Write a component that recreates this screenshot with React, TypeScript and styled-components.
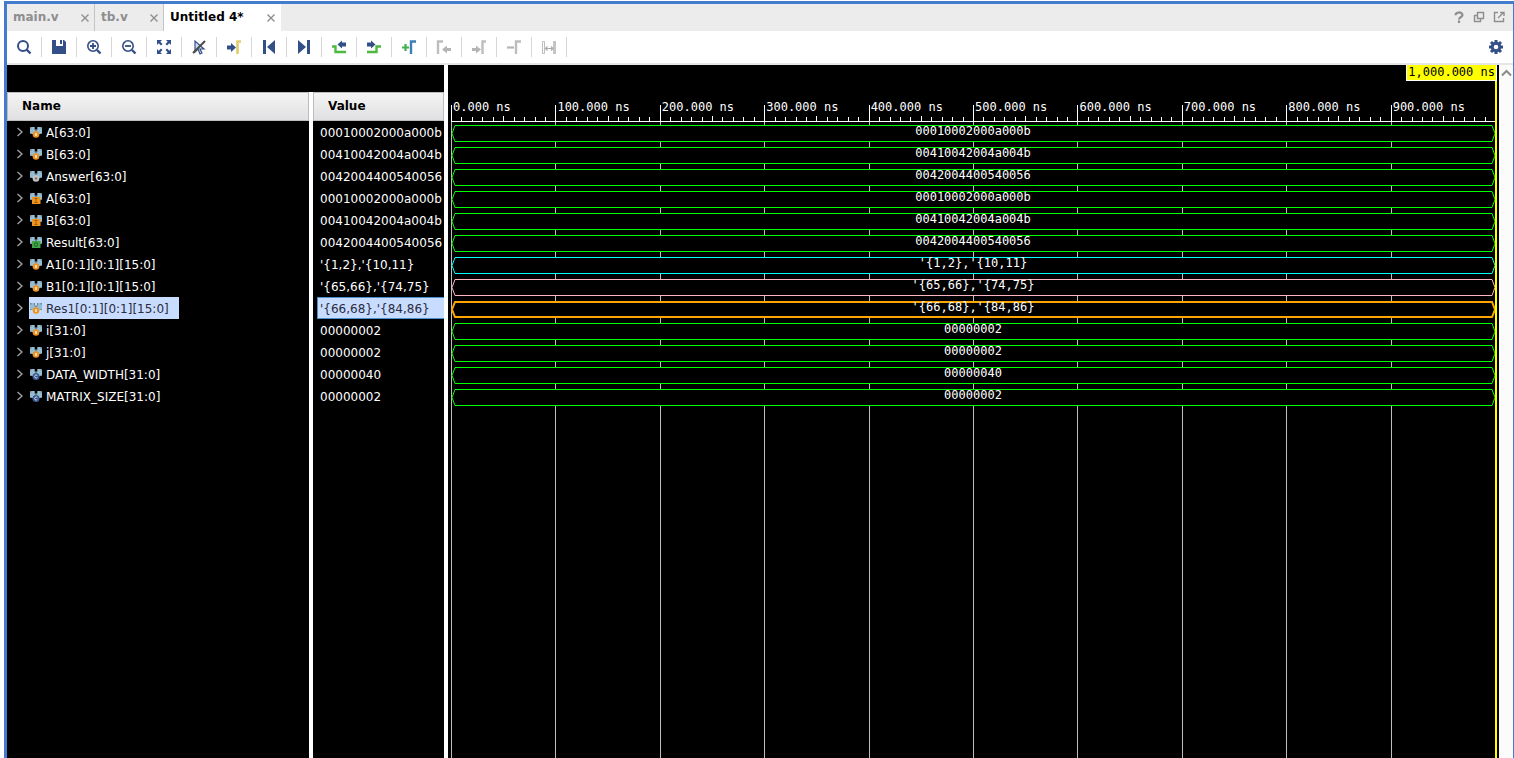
import React from 'react';
import styled, { createGlobalStyle, css } from 'styled-components';

const NAVY = '#334f88';
const LIME = '#00ff00';
const GRID = '#bebebe';

const Global = createGlobalStyle`
  * { box-sizing: border-box; }
  html, body, #root { height: 100%; }
  body { margin: 0; background: #fff; overflow: hidden; font: 12px/16px "DejaVu Sans", sans-serif; color: #000; }
  button { font: inherit; color: inherit; background: none; border: 0; padding: 0; margin: 0; }
  svg { display: block; }
`;

const Page = styled.div`
  height: 100vh;
  padding: 1px 0 0 4px;
`;

const Frame = styled.main`
  height: 100%;
  display: flex;
  flex-direction: column;
  border: solid #437bcd;
  border-width: 3px 1px 0 3px;
`;

const TabBar = styled.header`
  height: 27px;
  flex: none;
  display: flex;
  justify-content: space-between;
  background: #ececec;
`;

const Tabs = styled.nav`
  display: flex;
`;

const Tab = styled.div<{ $active?: boolean; $wide?: boolean }>`
  display: flex;
  align-items: center;
  justify-content: space-between;
  width: ${p => (p.$active ? 117 : p.$wide ? 88 : 69)}px;
  padding: 0 5px 0 6px;
  font-weight: bold;
  color: ${p => (p.$active ? '#000' : '#8e8e8e')};
  background: ${p => (p.$active ? '#fff' : 'transparent')};
  border-right: 1px solid ${p => (p.$active ? '#fff' : '#c4c4c4')};
`;

const TabTitle = styled.button`
  padding-bottom: 2px;
`;

const CloseButton = styled.button`
  color: #8e8e8e;
`;

const WindowButtons = styled.div`
  display: flex;
  align-items: center;
  gap: 8px;
  padding: 0 8px 2px 0;
  color: #8e8e8e;
`;

const ToolBar = styled.div`
  height: 34px;
  flex: none;
  display: flex;
  align-items: center;
  justify-content: space-between;
  padding-right: 9px;
  background: #fff;
  border-bottom: 2px solid #e6e6e6;
`;

const ToolGroup = styled.div`
  display: flex;
`;

const ToolButton = styled.button`
  width: 35px;
  height: 20px;
  display: flex;
  align-items: center;
  justify-content: center;
  border-right: 1px solid #d6d6d6;
  color: ${NAVY};
`;

const Body = styled.div`
  flex: 1;
  min-height: 0;
  display: flex;
  background: #fff;
`;

const SignalPanel = styled.section`
  width: 437px;
  flex: none;
  display: flex;
  flex-direction: column;
  background: #000;
`;

const PanelTop = styled.div`
  height: 27px;
  flex: none;
`;

const Columns = styled.div`
  flex: 1;
  display: flex;
  gap: 4px;
  background: #fff;
`;

const Column = styled.div<{ $fill?: boolean }>`
  ${p => (p.$fill ? css`flex: 1;` : css`width: 131px;`)}
  min-width: 0;
  overflow: hidden;
  background: #000;
  color: #fff;
`;

const ColumnHead = styled.div`
  height: 29px;
  padding: 0 14px;
  line-height: 27px;
  font-weight: bold;
  color: #000;
  background: linear-gradient(#f4f4f4, #e0e0e2);
  border: 1px solid #bdbdbd;
`;

const NameRow = styled.div`
  height: 22px;
  display: flex;
  align-items: center;
  gap: 6px;
  padding-left: 10px;
`;

const Expander = styled.button`
  width: 6px;
`;

const SignalName = styled.span<{ $selected?: boolean }>`
  height: 22px;
  display: flex;
  align-items: center;
  gap: 4px;
  padding: 1px 10px 0 1px;
  line-height: 20px;
  ${p => p.$selected && css`background: #c8dcff; color: #2b2b3d;`}
`;

const ValueCell = styled.div<{ $selected?: boolean }>`
  height: 22px;
  margin-left: 4px;
  padding: 1px 0 0 2px;
  border: solid transparent;
  border-width: 1px 0 1px 1px;
  line-height: 20px;
  white-space: nowrap;
  ${p => p.$selected && css`background: #c8dcff; border-color: #4a8fd0; color: #2b2b3d;`}
`;

const WavePanel = styled.section`
  flex: 1;
  min-width: 0;
  margin-left: 4px;
  padding: 0 2px 0 3px;
  background: #000;
  color: #fff;
  font: 12px/14px "DejaVu Sans Mono", monospace;
`;

const Plot = styled.div`
  position: relative;
  height: 100%;
  padding-right: 2px;
`;

const Cursor = styled.div`
  position: absolute;
  z-index: 2;
  top: 0;
  bottom: 0;
  right: 0;
  border-right: 2px solid #ffff00;
`;

const CursorLabel = styled.div`
  position: absolute;
  z-index: 3;
  top: 0;
  right: 0;
  height: 16px;
  padding: 0 1px;
  border: solid #fff;
  border-width: 0 1px 1px 1px;
  background: #ffff00;
  color: #000;
  white-space: nowrap;
`;

const Ruler = styled.div`
  height: 57px;
  display: flex;
  align-items: flex-end;
  border-bottom: 1px solid #fff;
`;

const Division = styled.div`
  flex: 1;
  min-width: 0;
  height: 16px;
  display: flex;
  flex-direction: column;
  justify-content: space-between;
  border-left: 1px solid #fff;
`;

const DivisionLabel = styled.span`
  height: 4px;
  padding-left: 1px;
  line-height: 4px;
  white-space: nowrap;
`;

const Ticks = styled.div`
  display: flex;
  align-items: flex-end;
`;

const Tick = styled.i<{ $h: number }>`
  flex: 1;
  height: ${p => p.$h}px;
  border-right: 1px solid #fff;
  &:last-child { border: 0; }
`;

const Grid = styled.div`
  position: absolute;
  top: 57px;
  bottom: 0;
  left: 0;
  right: 2px;
  display: flex;
`;

const GridLine = styled.div`
  flex: 1;
  border-left: 1px solid ${GRID};
`;

const WaveRows = styled.div`
  position: relative;
  padding-top: 3px;
  display: flex;
  flex-direction: column;
  gap: 5px;
`;

const Wave = styled.div<{ $color: string }>`
  height: 17px;
  display: flex;
  color: ${p => p.$color};
  svg { flex: none; width: 5px; height: 17px; overflow: visible; }
`;

const WaveBody = styled.div<{ $selected?: boolean }>`
  flex: 1;
  display: flex;
  align-items: center;
  justify-content: center;
  padding-bottom: 4px;
  background: #000;
  border: solid currentColor;
  border-width: ${p => (p.$selected ? '2px 0' : '1px 0')};
  span { color: #fff; line-height: 11px; }
`;

const ScrollBar = styled.div`
  width: 14px;
  flex: none;
  display: flex;
  justify-content: center;
  align-items: flex-start;
  padding: 4px 0 0 1px;
  background: #fbfbfb;
`;

const tools: Record<string, React.ReactNode> = {
  Find: <><circle cx="7" cy="7" r="5" fill="none" stroke={NAVY} strokeWidth="2" /><path d="M10.5 10.5l4 4" stroke={NAVY} strokeWidth="2.4" /></>,
  Save: <path d="M1 1h4v6h7V1h1l2 2v12H1zM9 1h2v4H9z" fill={NAVY} />,
  'Zoom In': <><circle cx="7" cy="7" r="5.2" fill="none" stroke={NAVY} strokeWidth="1.6" /><path d="M11 11l3.5 3.5" stroke={NAVY} strokeWidth="2.4" /><path d="M4 7h6M7 4v6" stroke={NAVY} strokeWidth="1.8" /></>,
  'Zoom Out': <><circle cx="7" cy="7" r="5.2" fill="none" stroke={NAVY} strokeWidth="1.6" /><path d="M11 11l3.5 3.5" stroke={NAVY} strokeWidth="2.4" /><path d="M4 7h6" stroke={NAVY} strokeWidth="1.8" /></>,
  'Zoom Fit': <><path d="M1 1h5L4.300 2.700 6.500 5 5 6.500 2.700 4.300 1 6zM15 1v5l-1.700-1.700L11 6.500 9.500 5l2.200-2.300L10 1zM1 15v-5l1.700 1.700L5 9.500 6.500 11l-2.200 2.300L6 15zM15 15h-5l1.700-1.700L9.500 11 11 9.500l2.300 2.200L15 10z" fill={NAVY} /></>,
  'Cursor Snap': <><path d="M4 2v11l3-3 2 5 2-1-2-4h4z" fill="#d5dcea" stroke={NAVY} strokeWidth="1.200" /><path d="M2 14L14 2" stroke="#4a4a4a" strokeWidth="2" /></>,
  'Go to Cursor': <><path d="M1 6.500h4V4l5 4.500L5 13v-2.500H1z" fill={NAVY} /><path d="M11.500 15V2.500H15" fill="none" stroke="#e3cb70" strokeWidth="2.600" /></>,
  'Go to Start': <path d="M2 1h3v14H2zM14 1v14L6 8z" fill={NAVY} />,
  'Go to End': <path d="M11 1h3v14h-3zM2 1v14l8-7z" fill={NAVY} />,
  'Previous Transition': <><path d="M1 7.500h3.500v5.500H15" fill="none" stroke="#4db93f" strokeWidth="2.400" /><path d="M15 3.500h-4V1.500L6.500 5.500 11 9.500v-2h4z" fill={NAVY} /></>,
  'Next Transition': <><path d="M1 13h9.500V7.500H15" fill="none" stroke="#4db93f" strokeWidth="2.400" /><path d="M1 3.500h4v-2l4.500 4-4.500 4v-2H1z" fill={NAVY} /></>,
  'Add Marker': <><path d="M1 8.500h7M4.500 5v7" stroke="#45ae50" strokeWidth="2.200" /><path d="M10 15V2.500h5" fill="none" stroke="#3b7fb5" strokeWidth="2.400" /></>,
  'Previous Marker': <><path d="M2 15V2.500h5" fill="none" stroke="#bdbdbd" strokeWidth="2.400" /><path d="M15 9h-4V6.500l-5 4 5 4V12h4z" fill="#b5b5b5" /></>,
  'Next Marker': <><path d="M11.500 15V2.500H15" fill="none" stroke="#bdbdbd" strokeWidth="2.400" /><path d="M1 9h4V6.500l5 4-5 4V12H1z" fill="#b5b5b5" /></>,
  'Delete Marker': <><path d="M1 8.500h7" stroke="#b5b5b5" strokeWidth="2.200" /><path d="M10 15V2.500h5" fill="none" stroke="#bdbdbd" strokeWidth="2.400" /></>,
  'Swap Cursors': <><path d="M1.500 2.500h2v12h-2z" fill="none" stroke="#bdbdbd" /><path d="M12 2h3v13h-3z" fill="#c4c4c4" /><path d="M5 9.500h6M6.500 7.500l-2 2 2 2M10 7.500l2 2-2 2" fill="none" stroke="#ababab" strokeWidth="1.200" /></>,
};

type Kind = 'reg' | 'net' | 'in' | 'out' | 'const';
interface Signal { name: string; value: string; kind: Kind; color?: string; selected?: boolean }

const signals: Signal[] = [
  { name: 'A[63:0]', value: '00010002000a000b', kind: 'reg' },
  { name: 'B[63:0]', value: '00410042004a004b', kind: 'reg' },
  { name: 'Answer[63:0]', value: '0042004400540056', kind: 'net' },
  { name: 'A[63:0]', value: '00010002000a000b', kind: 'in' },
  { name: 'B[63:0]', value: '00410042004a004b', kind: 'in' },
  { name: 'Result[63:0]', value: '0042004400540056', kind: 'out' },
  { name: 'A1[0:1][0:1][15:0]', value: "'{1,2},'{10,11}", kind: 'reg', color: '#00ffff' },
  { name: 'B1[0:1][0:1][15:0]', value: "'{65,66},'{74,75}", kind: 'reg', color: '#ffb6c1' },
  { name: 'Res1[0:1][0:1][15:0]', value: "'{66,68},'{84,86}", kind: 'reg', color: '#ffa500', selected: true },
  { name: 'i[31:0]', value: '00000002', kind: 'reg' },
  { name: 'j[31:0]', value: '00000002', kind: 'reg' },
  { name: 'DATA_WIDTH[31:0]', value: '00000040', kind: 'const' },
  { name: 'MATRIX_SIZE[31:0]', value: '00000002', kind: 'const' },
];

const times = ['0.000 ns', '100.000 ns', '200.000 ns', '300.000 ns', '400.000 ns', '500.000 ns', '600.000 ns', '700.000 ns', '800.000 ns', '900.000 ns'];
const tickHeights = [4, 4, 4, 4, 5, 4, 4, 4, 4, 4];

function SignalIcon({ kind }: { kind: Kind }) {
  return (
    <svg width="12" height="12" viewBox="0 0 12 12" aria-hidden="true">
      <path d="M0 0h5v2l1 1.500L7 2V0h5v7H9.500L8 8H4L2.500 7H0z" fill="#93bdd3" />
      <path d="M0 0h1.500v1.500H0zM10.500 0H12v1.500h-1.500zM0 6h1.500v1H0zM10.500 6H12v1h-1.500z" fill="#70838f" />
      <path d="M4.500 0v2L6 4l1.500-2V0" fill="none" stroke="#70838f" />
      {kind === 'reg' && <><circle cx="6" cy="7.500" r="3.300" fill="#ef9224" /><path d="M5 6h2v3H5z" fill="#fbd9a6" /></>}
      {kind === 'net' && <><circle cx="6" cy="7.500" r="3.300" fill="#c4c4c4" /><circle cx="6" cy="7.500" r="1.200" fill="#777" /></>}
      {kind === 'const' && <><circle cx="6" cy="7.500" r="3.500" fill="#3d5a90" /><path d="M7.300 6.500A1.500 1.500 0 1 0 7.300 8.500" fill="none" stroke="#d8e2f3" /></>}
      {kind === 'in' && <><path d="M2 4h8.500v7H2z" fill="#ee931f" /><path d="M4.500 5.500h3M4.500 9.500h3M6 5.500v4" stroke="#a15e0a" /></>}
      {kind === 'out' && <><path d="M2 4h8.500v7H2z" fill="#42a548" /><ellipse cx="6" cy="7.500" rx="1.500" ry="2" fill="none" stroke="#1e6b27" /></>}
    </svg>
  );
}

function WaveRow({ signal }: { signal: Signal }) {
  const w = signal.selected ? 2 : 1;
  const t = w / 2;
  return (
    <Wave $color={signal.color ?? LIME}>
      <svg viewBox="0 0 5 17" aria-hidden="true">
        <path d={`M5 ${t}H4L1 8.500L4 ${17 - t}H5`} fill="none" stroke="currentColor" strokeWidth={w} />
      </svg>
      <WaveBody $selected={signal.selected}><span>{signal.value}</span></WaveBody>
      <svg viewBox="0 0 5 17" aria-hidden="true">
        <path d={`M0 ${t}H2L5 8.500L2 ${17 - t}H0`} fill="none" stroke="currentColor" strokeWidth={w} />
      </svg>
    </Wave>
  );
}

function Close({ label }: { label: string }) {
  return (
    <CloseButton aria-label={`Close ${label}`}>
      <svg width="8" height="8" viewBox="0 0 8 8"><path d="M.5.5l7 7M7.500.5l-7 7" stroke="currentColor" strokeWidth="1.400" /></svg>
    </CloseButton>
  );
}

export default function App() {
  return (
    <Page>
      <Global />
      <Frame>
        <TabBar>
          <Tabs>
            <Tab $wide><TabTitle>main.v</TabTitle><Close label="main.v" /></Tab>
            <Tab><TabTitle>tb.v</TabTitle><Close label="tb.v" /></Tab>
            <Tab $active><TabTitle>Untitled 4*</TabTitle><Close label="Untitled 4" /></Tab>
          </Tabs>
          <WindowButtons>
            <button aria-label="Help"><svg width="12" height="12" viewBox="0 0 12 12"><path d="M2.500 4.200C2.500.6 9.500.6 9.500 4 9.500 6 6 6 6 8.500M6 9.500V12" fill="none" stroke="currentColor" strokeWidth="2.200" /></svg></button>
            <button aria-label="Restore"><svg width="12" height="12" viewBox="0 0 12 12"><path d="M4.500 1.500h6v6h-6zM4.500 4.500h-3v6h6v-3" fill="none" stroke="currentColor" strokeWidth="1.400" /></svg></button>
            <button aria-label="Float"><svg width="12" height="12" viewBox="0 0 12 12"><path d="M5 1.500H1.500v9h9V7M5 7l5-5M7 1.500h4V5" fill="none" stroke="currentColor" strokeWidth="1.400" /></svg></button>
          </WindowButtons>
        </TabBar>
        <ToolBar>
          <ToolGroup>
            {Object.entries(tools).map(([label, art]) => (
              <ToolButton key={label} aria-label={label}>
                <svg width="16" height="16" viewBox="0 0 16 16">{art}</svg>
              </ToolButton>
            ))}
          </ToolGroup>
          <button aria-label="Settings">
            <svg width="16" height="16" viewBox="0 0 16 16">
              <g stroke={NAVY} strokeWidth="3"><path d="M8 1v14M1 8h14M3 3l10 10M13 3L3 13" /></g>
              <circle cx="8" cy="8" r="5.200" fill={NAVY} /><circle cx="8" cy="8" r="2.300" fill="#fff" />
            </svg>
          </button>
        </ToolBar>
        <Body>
          <SignalPanel>
            <PanelTop />
            <Columns>
              <Column $fill>
                <ColumnHead>Name</ColumnHead>
                {signals.map((s, i) => (
                  <NameRow key={i}>
                    <Expander aria-label={`Expand ${s.name}`}>
                      <svg width="6" height="10" viewBox="0 0 6 10"><path d="M.5 1L5 5 .5 9" fill="none" stroke="#a0a0a0" strokeWidth="1.400" /></svg>
                    </Expander>
                    <SignalName $selected={s.selected}><SignalIcon kind={s.kind} />{s.name}</SignalName>
                  </NameRow>
                ))}
              </Column>
              <Column>
                <ColumnHead>Value</ColumnHead>
                {signals.map((s, i) => <ValueCell key={i} $selected={s.selected}>{s.value}</ValueCell>)}
              </Column>
            </Columns>
          </SignalPanel>
          <WavePanel>
            <Plot>
              <Grid>{times.map(t => <GridLine key={t} />)}</Grid>
              <Ruler>
                {times.map(t => (
                  <Division key={t}>
                    <DivisionLabel>{t}</DivisionLabel>
                    <Ticks>{tickHeights.map((h, i) => <Tick key={i} $h={h} />)}</Ticks>
                  </Division>
                ))}
              </Ruler>
              <WaveRows>{signals.map((s, i) => <WaveRow key={i} signal={s} />)}</WaveRows>
              <Cursor />
              <CursorLabel>1,000.000 ns</CursorLabel>
            </Plot>
          </WavePanel>
          <ScrollBar>
            <button aria-label="Scroll up">
              <svg width="11" height="8" viewBox="0 0 11 8"><path d="M1 6.500L5.500 2 10 6.500" fill="none" stroke="#8a8a8a" strokeWidth="2" /></svg>
            </button>
          </ScrollBar>
        </Body>
      </Frame>
    </Page>
  );
}
